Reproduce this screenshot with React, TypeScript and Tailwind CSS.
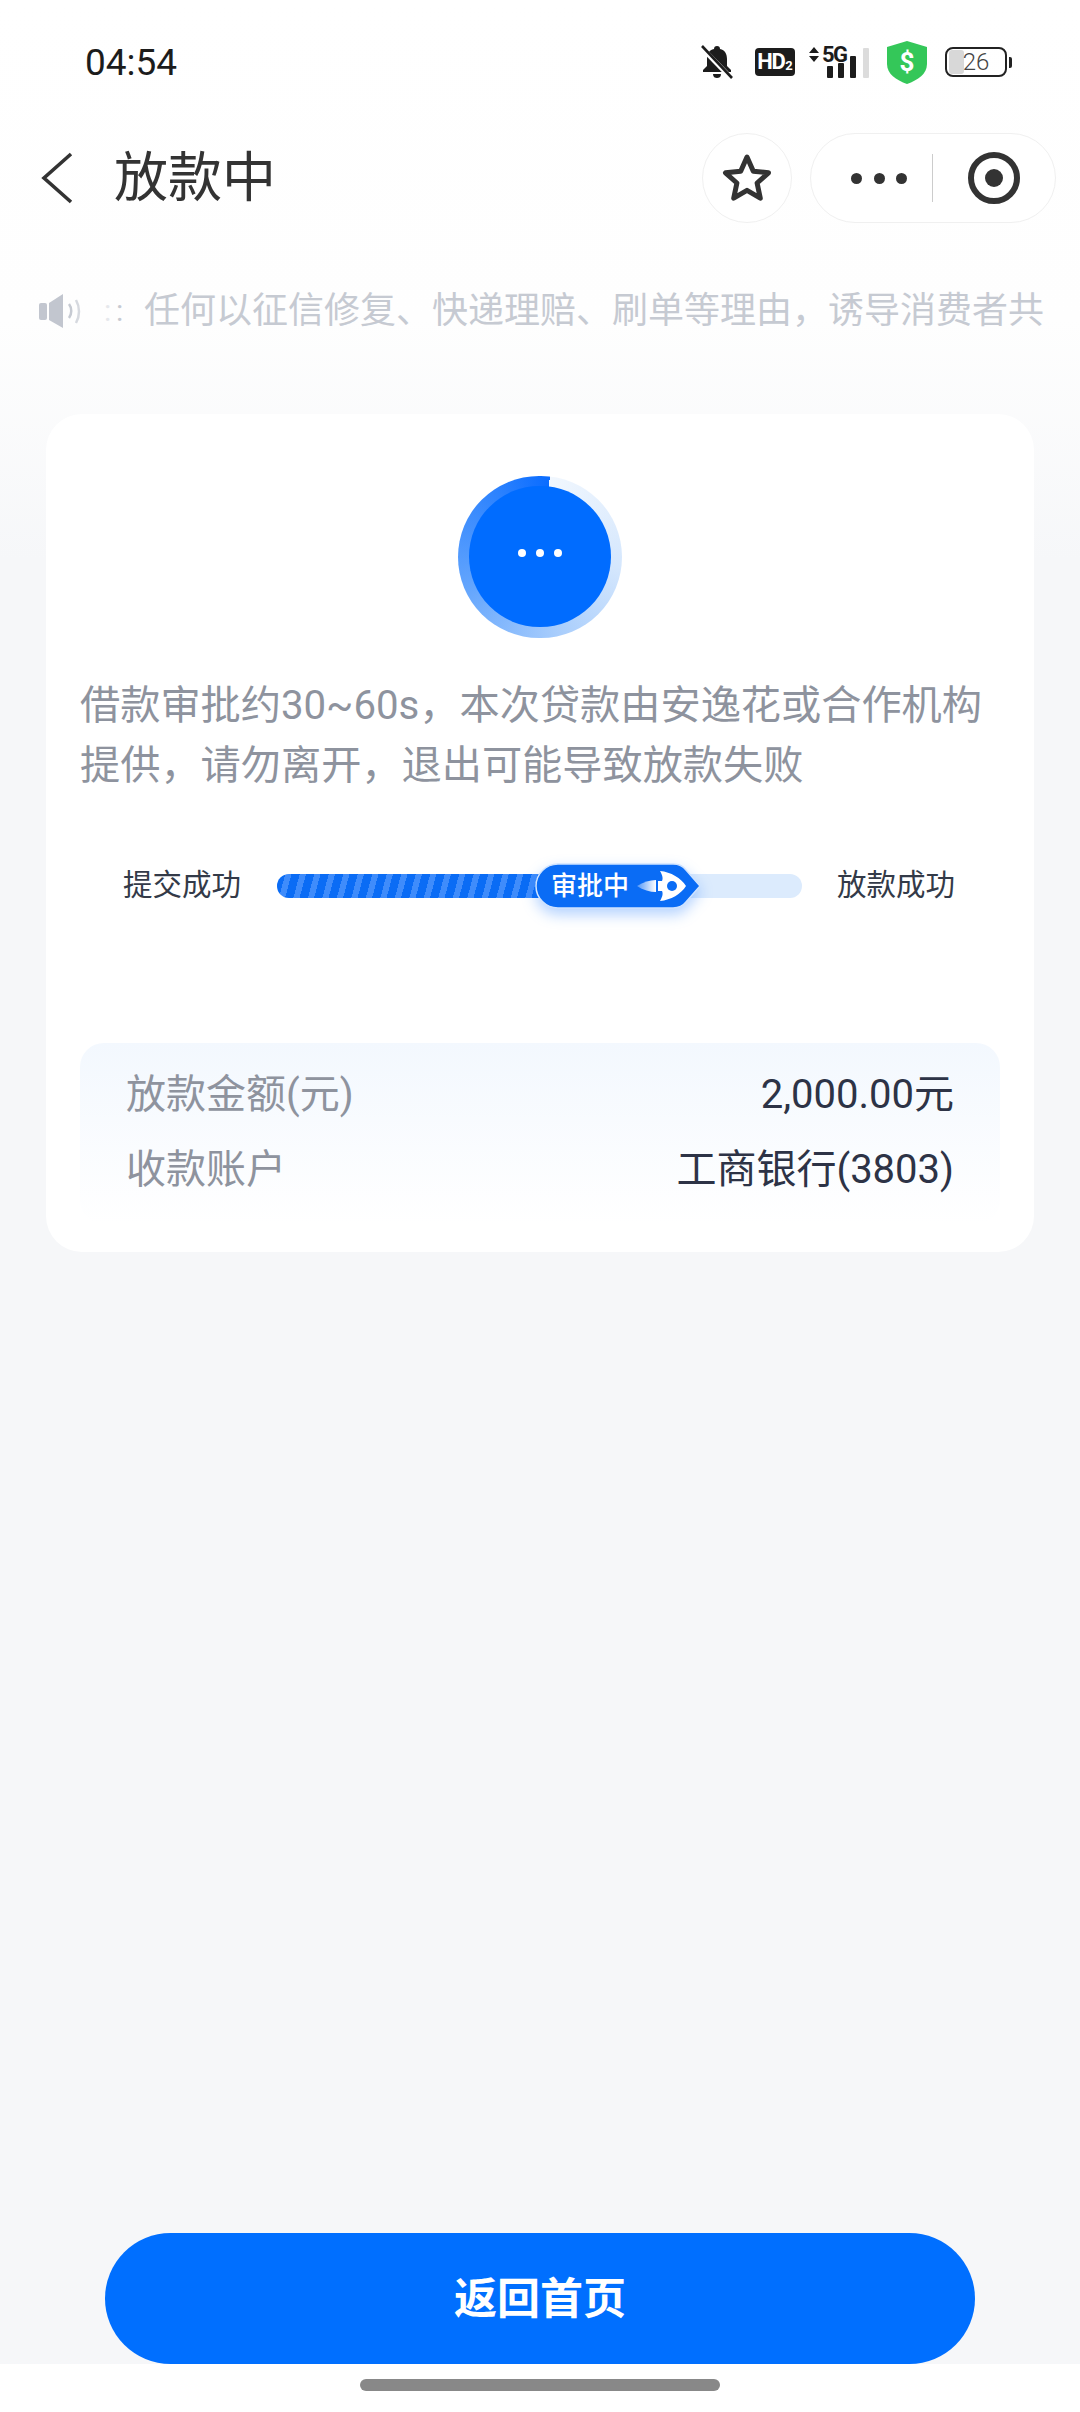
import type { ReactNode } from "react";

function BellMuted() {
  return (
    <svg width="32" height="34" viewBox="0 0 32 34">
      <path
        d="M16 1c2 0 3 1 3 3 5 1 7 5 7 10v7l4 4v2H2v-2l4-4v-7c0-5 2-9 7-10 0-2 1-3 3-3z"
        fill="#1c1c1c"
      />
      <path d="M12 29h8c0 3-2 4-4 4s-4-1-4-4z" fill="#1c1c1c" />
      <path d="M1 3l29 30" stroke="#fff" strokeWidth="5" />
      <path d="M1 1l30 32" stroke="#1c1c1c" strokeWidth="2.6" />
    </svg>
  );
}

function SignalIcon() {
  return (
    <div className="relative h-[32px] w-[60px]">
      <svg width="60" height="32" viewBox="0 0 60 32" className="absolute inset-0">
        <path d="M5 1l5 6H0zM5 16l5-6H0z" fill="#1c1c1c" />
        <rect x="18" y="20" width="6" height="12" rx="1" fill="#1c1c1c" />
        <rect x="29" y="17" width="6" height="15" rx="1" fill="#1c1c1c" />
        <rect x="41" y="10" width="6" height="22" rx="1" fill="#1c1c1c" />
        <rect x="54" y="2" width="6" height="30" rx="1" fill="#dcdcdc" />
      </svg>
      <span className="absolute top-0 left-[13px] text-[22px] leading-[18px] font-bold tracking-[-1.5px] text-[#1c1c1c]">
        5G
      </span>
    </div>
  );
}

function ShieldIcon() {
  return (
    <div className="relative h-[43px] w-[40px]">
      <svg width="40" height="43" viewBox="0 0 40 43" className="absolute inset-0">
        <path d="M20 0l20 6v17c0 10-9 16-20 20C9 39 0 33 0 23V6z" fill="#34c759" />
      </svg>
      <span className="absolute inset-0 flex items-center justify-center text-[26px] leading-none font-bold text-white">
        $
      </span>
    </div>
  );
}

function BatteryIcon() {
  return (
    <div className="flex items-center">
      <div className="relative flex h-[30px] w-[62px] items-center justify-center rounded-[8px] border-2 border-[#222] text-[24px] leading-none font-light text-[#444]">
        <div className="absolute top-[1px] bottom-[1px] left-[2px] w-[15px] rounded-[3px] bg-[#d8d8d8]" />
        <span className="relative">26</span>
      </div>
      <div className="ml-[2px] h-[11px] w-[3px] rounded-r-[2px] bg-[#222]" />
    </div>
  );
}

function StatusBar() {
  return (
    <div className="flex h-[124px] items-center pr-[68px] pl-[85px]">
      <span className="text-[37px] leading-none text-[#1c1c1c]">04:54</span>
      <div className="ml-auto flex items-center">
        <BellMuted />
        <div className="ml-[22px] flex h-[28px] w-[40px] items-center justify-center rounded-[4px] bg-[#1c1c1c] text-[22px] leading-none font-bold tracking-[-1.5px] text-white">
          HD<span className="mt-[6px] ml-[1px] text-[13px] tracking-normal">2</span>
        </div>
        <div className="ml-[14px]">
          <SignalIcon />
        </div>
        <div className="ml-[18px]">
          <ShieldIcon />
        </div>
        <div className="ml-[18px]">
          <BatteryIcon />
        </div>
      </div>
    </div>
  );
}

function Header() {
  return (
    <div className="flex h-[108px] items-center pr-[24px] pl-[41px]">
      <svg width="32" height="52" viewBox="0 0 32 52" fill="none">
        <path d="M30 2L3 26l27 24" stroke="#333" strokeWidth="3.6" />
      </svg>
      <h1 className="mt-[2px] ml-[41px] text-[54px] leading-none font-normal text-[#333]">放款中</h1>
      <div className="ml-auto flex items-center gap-[18px]">
        <div className="flex h-[90px] w-[90px] items-center justify-center rounded-full border border-[#f0f0f0] bg-white">
          <svg width="52" height="52" viewBox="0 0 52 52" fill="none">
            <path
              d="M26 5l6.3 14.2 15.2 1.6-11.4 10.2 3.2 15.2L26 38.4l-13.3 7.8 3.2-15.2L4.5 20.8l15.2-1.6z"
              stroke="#333"
              strokeWidth="5"
              strokeLinejoin="round"
            />
          </svg>
        </div>
        <div className="flex h-[90px] w-[246px] items-center rounded-full border border-[#f0f0f0] bg-white pl-[40px]">
          <div className="flex w-[56px] justify-between">
            <span className="h-[11px] w-[11px] rounded-full bg-[#333]" />
            <span className="h-[11px] w-[11px] rounded-full bg-[#333]" />
            <span className="h-[11px] w-[11px] rounded-full bg-[#333]" />
          </div>
          <div className="ml-[25px] h-[48px] w-px bg-[#ccc]" />
          <div className="ml-[35px] flex h-[52px] w-[52px] items-center justify-center rounded-full border-[6px] border-[#333]">
            <span className="h-[18px] w-[18px] rounded-full bg-[#333]" />
          </div>
        </div>
      </div>
    </div>
  );
}

function NoticeBar() {
  return (
    <div className="flex h-[156px] items-center overflow-hidden pt-[2px] pl-[39px] text-[36px] leading-none whitespace-nowrap text-[#c6cad2]">
      <svg width="42" height="34" viewBox="0 0 42 34" fill="none">
        <rect x="0" y="9" width="8" height="17" rx="2" fill="#c2c6cf" />
        <path d="M10 9l14-9v34L10 26z" fill="#c2c6cf" />
        <path d="M30 10c3 4 3 10 0 14" stroke="#c6cad2" strokeWidth="2.5" />
        <path d="M37 6c4 7 4 16 0 23" stroke="#d6d9df" strokeWidth="2.5" />
      </svg>
      <span className="ml-[23px] w-[12px] text-[30px] text-[#e6e8ec]">:</span>
      <span className="w-[28px] text-[30px]">:</span>
      <span>任何以征信修复、快递理赔、刷单等理由，诱导消费者共</span>
    </div>
  );
}

function Spinner() {
  return (
    <div className="relative mx-auto h-[162px] w-[164px] rounded-full bg-[conic-gradient(from_7deg,#f1f7fe_0deg,#d5e7fd_90deg,#a8cdfc_160deg,#63a5fd_240deg,#2c82fe_320deg,#0a6cff_360deg)]">
      <div className="absolute top-[10px] left-[11px] flex h-[141px] w-[142px] items-center justify-center gap-[10px] rounded-full bg-[#006cff] pb-[7px]">
        <span className="h-[8px] w-[8px] rounded-full bg-white" />
        <span className="h-[8px] w-[8px] rounded-full bg-white" />
        <span className="h-[8px] w-[8px] rounded-full bg-white" />
      </div>
    </div>
  );
}

function StatusPill() {
  return (
    <div className="absolute top-[-11px] left-[258px] flex h-[46px] w-[166px] items-center">
      <svg
        width="166"
        height="46"
        viewBox="0 0 166 46"
        className="absolute inset-0 drop-shadow-[0_6px_7px_rgba(10,108,255,0.3)]"
      >
        <path
          d="M23 1h115c6 0 10 2 13 6l14 16-14 16c-3 4-7 6-13 6H23a22 22 0 0 1 0-44z"
          fill="#0a6cf5"
          stroke="#cfe3ff"
          strokeWidth="1.5"
        />
      </svg>
      <span className="relative ml-[16px] text-[26px] leading-none font-medium text-white">审批中</span>
      <svg width="50" height="30" viewBox="0 0 50 30" className="relative ml-[8px]">
        <defs>
          <linearGradient id="flame" x1="0" x2="1" y1="0" y2="0">
            <stop offset="0" stopColor="#fff" stopOpacity="0.3" />
            <stop offset="1" stopColor="#fff" />
          </linearGradient>
        </defs>
        <path d="M0 15c6-4 13-6 19-6v12C13 21 6 19 0 15z" fill="url(#flame)" />
        <path
          d="M23 0c11 1 21 7 26 15-5 8-15 14-26 15 3-5 3-8 2-10h-4V10h4c1-2 1-5-2-10z"
          fill="#fff"
        />
        <circle cx="35" cy="15" r="5" fill="#0a6cf5" />
      </svg>
    </div>
  );
}

function Progress() {
  return (
    <div className="mt-[67px] flex h-[46px] items-center px-[43px] text-[29.5px] leading-none text-[#333a48]">
      <span className="w-[120px] shrink-0">提交成功</span>
      <div className="relative ml-[34px] h-[24px] w-[526px] rounded-full bg-[#dcebfd]">
        <div className="h-full w-[290px] rounded-l-full bg-[repeating-linear-gradient(105deg,#0a6cf5_0px,#0a6cf5_8px,#3f8cfb_8px,#3f8cfb_14px)]" />
        <StatusPill />
      </div>
      <span className="ml-[35px] w-[120px] shrink-0">放款成功</span>
    </div>
  );
}

function InfoRow({ label, value }: { label: string; value: ReactNode }) {
  return (
    <div className="flex h-[75px] items-center justify-between">
      <span className="text-[#8e939e]">{label}</span>
      <span className="text-[#2d3346]">{value}</span>
    </div>
  );
}

export default function App() {
  return (
    <div className="flex h-[2412px] w-[1080px] flex-col overflow-hidden bg-[linear-gradient(180deg,#ffffff_0px,#fefefe_320px,#f6f7f9_560px)] font-['Roboto','Noto_Sans_CJK_SC',sans-serif]">
      <StatusBar />
      <Header />
      <NoticeBar />
      <main className="mt-[26px] flex-1 px-[46px]">
        <section className="rounded-[36px] bg-white px-[34px] pt-[62px] pb-[28px]">
          <Spinner />
          <p className="mt-[38px] text-[40.2px] leading-[60px] text-[#8e939e]">
            借款审批约30~60s，本次贷款由安逸花或合作机构提供，请勿离开，退出可能导致放款失败
          </p>
          <Progress />
          <div className="mt-[134px] rounded-[24px] bg-[linear-gradient(180deg,#f3f8fe,#ffffff)] pt-[14px] pr-[46px] pb-[17px] pl-[46px] text-[40px] leading-none">
            <InfoRow label="放款金额(元)" value="2,000.00元" />
            <InfoRow label="收款账户" value="工商银行(3803)" />
          </div>
        </section>
      </main>
      <div className="px-[105px]">
        <button
          type="button"
          className="h-[131px] w-full rounded-full bg-[#006fff] pt-[2px] text-[43px] leading-none font-bold text-white"
        >
          返回首页
        </button>
      </div>
      <div className="flex h-[48px] justify-center bg-white pt-[15px]">
        <div className="h-[12px] w-[360px] rounded-full bg-[#888]" />
      </div>
    </div>
  );
}
